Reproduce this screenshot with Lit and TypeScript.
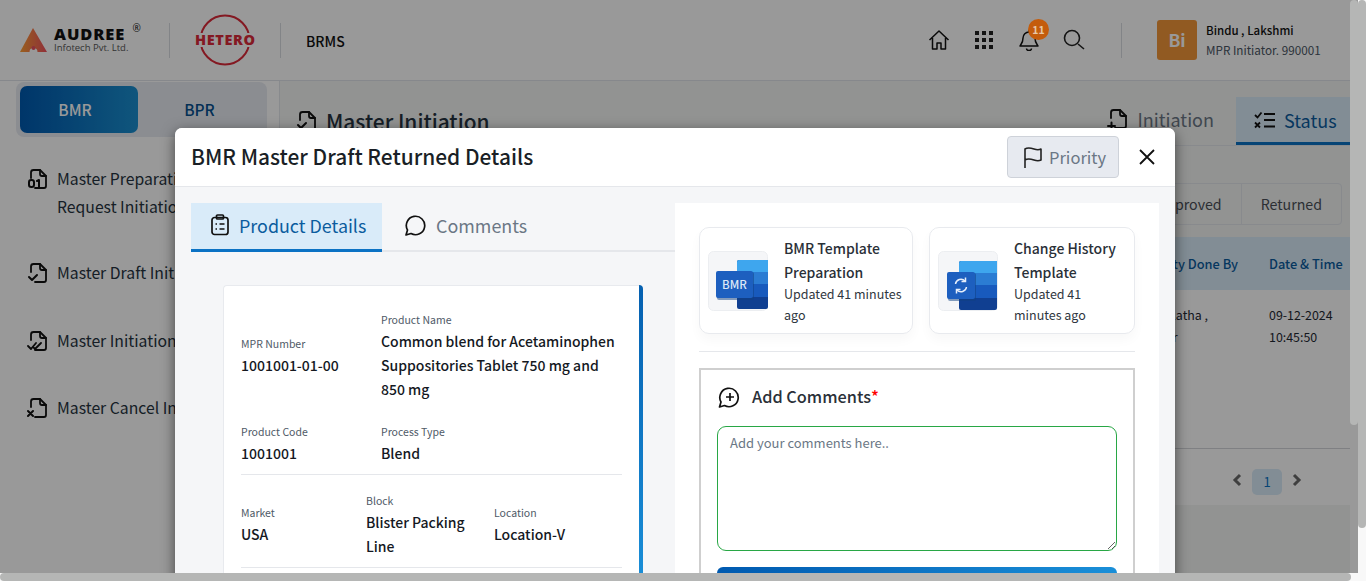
import { LitElement, html, css, svg } from "lit";
import { customElement } from "lit/decorators.js";

// document icon shared by the sidebar and the page tabs, only the mark at the corner changes
const docIcon = (mark: unknown, size = 22) => html`<svg width=${size} height=${size} viewBox="0 0 22 22" fill="none" stroke="#111" stroke-width="1.800" stroke-linejoin="round" stroke-linecap="round">
  <path d="M4 10V4.500A2.500 2.500 0 0 1 6.500 2H13l6 6v10a2 2 0 0 1-2 2H8" />
  <path d="M13 2v4a2 2 0 0 0 2 2h4" />
  ${mark}
</svg>`;

const sideItems = [
  { label: "Master Preparation", label2: "Request Initiation", mark: svg`<rect x="2" y="12" width="5" height="7" rx="2.200" stroke-width="2"/><path d="M10 13l2-1v7" stroke-width="2"/>` },
  { label: "Master Draft Initiation", mark: svg`<path d="M2 15l3 3 5-5" stroke-width="2"/>` },
  { label: "Master Initiation", mark: svg`<path d="M1 16l3 3 5-6M7 18l1 1 6-6" stroke-width="1.800"/>` },
  { label: "Master Cancel Initiation", mark: svg`<path d="M1 14l5 5M6 14l-5 5" stroke-width="2"/>` },
];

const fields1 = [
  { label: "MPR Number", value: "1001001-01-00" },
  { label: "Product Name", value: "Common blend for Acetaminophen Suppositories Tablet 750 mg and 850 mg" },
];
const fields2 = [
  { label: "Product Code", value: "1001001" },
  { label: "Process Type", value: "Blend" },
];
const fields3 = [
  { label: "Market", value: "USA" },
  { label: "Block", value: "Blister Packing Line" },
  { label: "Location", value: "Location-V" },
];

const tileStack = (x: number, y: number, w: number) => svg`
  <rect x=${x} y=${y} width=${w} height="49" rx="2" fill="#103f91"/>
  <path d="M${x} ${y + 2}a2 2 0 0 1 2-2h${w - 2}v12h-${w}z" fill="#3ea6ee"/>
  <rect x=${x} y=${y + 12} width=${w} height="12" fill="#2b7cd3"/>
  <rect x=${x} y=${y + 24} width=${w} height="13" fill="#185abd"/>
`;

@customElement("app-root")
export class AppRoot extends LitElement {
  static styles = css`
    :host {
      display: block;
      position: relative;
      width: 1366px;
      height: 581px;
      overflow: hidden;
      background: #fff;
      font-family: "Noto Sans CJK SC", "Noto Sans", sans-serif;
      color: #1f2933;
    }
    .page {
      display: flex;
      flex-direction: column;
      width: 1350px;
      height: 581px;
    }
    .topbar {
      display: flex;
      align-items: center;
      height: 80px;
      flex: none;
      background: #fff;
      border-bottom: 1px solid #dfe3ea;
    }
    .logo-a {
      display: flex;
      align-items: center;
      gap: 7px;
      margin-left: 20px;
      width: 149px;
    }
    .logo-a b {
      display: block;
      font-family: "Open Sans", sans-serif;
      font-size: 16.500px;
      line-height: 16px;
      font-weight: 800;
      color: #111;
      letter-spacing: 0.9px;
    }
    .logo-a .reg {
      font-family: "Open Sans", sans-serif;
      font-size: 10px;
      line-height: 10px;
      align-self: flex-start;
      margin: -3px 0 0 -3px;
      color: #111;
    }
    .logo-a small {
      display: block;
      font-family: "Open Sans", sans-serif;
      font-size: 9.500px;
      line-height: 12px;
      color: #555;
    }
    .vr {
      width: 1px;
      height: 35px;
      background: #d9dce2;
      flex: none;
    }
    .logo-h {
      width: 110px;
      display: flex;
      justify-content: center;
      flex: none;
    }
    .brms {
      margin-left: 25px;
      padding-top: 1px;
      font-size: 14px;
      font-weight: 500;
      color: #111;
    }
    .tools {
      display: flex;
      align-items: center;
      margin-left: auto;
    }
    .tool {
      position: relative;
      width: 45px;
      height: 24px;
      display: flex;
      justify-content: center;
      align-items: center;
    }
    .tools .vr {
      margin: 0 35px 0 25px;
    }
    .badge {
      position: absolute;
      z-index: 20;
      left: 22px;
      top: -9px;
      width: 21px;
      height: 21px;
      border-radius: 50%;
      background: #c45c0c;
      color: #e8c7a6;
      font-size: 10.500px;
      font-weight: 700;
      line-height: 21px;
      text-align: center;
    }
    .user {
      display: flex;
      align-items: center;
      gap: 9px;
      width: 193px;
    }
    .avatar {
      width: 40px;
      height: 40px;
      border-radius: 3px;
      background: #f2963a;
      color: #fff;
      font-size: 17.500px;
      font-weight: 700;
      text-align: center;
      line-height: 40px;
    }
    .user b {
      display: block;
      font-size: 11.500px;
      font-weight: 500;
      line-height: 20px;
      color: #111;
    }
    .user span {
      display: block;
      font-size: 11.700px;
      line-height: 20px;
      color: #4a5563;
    }
    .content {
      display: flex;
      flex: 1;
      min-height: 0;
    }
    .side {
      width: 280px;
      flex: none;
      box-sizing: border-box;
      border-right: 1px solid #e3e6ec;
      padding: 1px 12px 0 16px;
    }
    .switch {
      display: flex;
      height: 55px;
      box-sizing: border-box;
      padding: 4px;
      border-radius: 8px;
      background: #e8ebf2;
    }
    .switch div {
      flex: 1;
      text-align: center;
      font-size: 15.500px;
      line-height: 47px;
      font-weight: 500;
      color: #06508f;
      border-radius: 7px;
      padding-right: 2px;
    }
    .switch .on {
      flex: none;
      width: 110px;
      padding-right: 8px;
      color: #fff;
      background: linear-gradient(90deg, #005ab0, #1a8fd0);
    }
    .side ul {
      list-style: none;
      margin: 28px 0 0;
      padding: 0 0 0 11px;
    }
    .side li {
      display: flex;
      gap: 8px;
      font-size: 15.750px;
      line-height: 28px;
      color: #263340;
      margin-bottom: 39px;
    }
    .side li:first-child {
      margin-bottom: 38px;
    }
    .side li:nth-child(2) {
      margin-bottom: 40px;
    }
    .side svg {
      flex: none;
      margin-top: 3px;
    }
    .main {
      flex: 1;
      min-width: 0;
      display: flex;
      flex-direction: column;
      background: #f3f5f4;
    }
    .main-head {
      display: flex;
      justify-content: space-between;
      align-items: flex-end;
      height: 64px;
      flex: none;
      padding-left: 16px;
      border-bottom: 1px solid #e3e6ec;
    }
    .main-title {
      display: flex;
      align-items: center;
      gap: 8px;
      font-size: 20.900px;
      font-weight: 500;
      height: 48px;
      color: #263340;
    }
    .page-tabs {
      display: flex;
    }
    .page-tab {
      display: flex;
      align-items: center;
      gap: 9px;
      height: 48px;
      box-sizing: border-box;
      padding: 0 22px 5px 10px;
      font-size: 18px;
      color: #6b7785;
    }
    .page-tab.on {
      width: 114px;
      padding: 0 0 0 18px;
      color: #0b5c9e;
      background: #d9ebf9;
      border-bottom: 3px solid #0b72c4;
    }
    .sub {
      display: flex;
      justify-content: flex-end;
      margin: 37px 8px 12px 0;
    }
    .seg {
      display: flex;
      height: 40px;
      border: 1px solid #e3e6ec;
      border-radius: 4px;
      font-size: 14.200px;
      line-height: 40px;
      color: #4a4f57;
    }
    .seg span {
      padding: 0 19px;
    }
    .seg span + span {
      border-left: 1px solid #e3e6ec;
    }
    .panel {
      background: #fff;
      height: 268px;
    }
    .thead,
    .trow {
      display: grid;
      grid-template-columns: 1fr 130px 81px;
      font-size: 12.400px;
    }
    .thead {
      height: 53px;
      line-height: 53px;
      font-size: 12.800px;
      font-weight: 500;
      color: #0b5c9e;
      background: #d9ebf9;
    }
    .trow {
      height: 159px;
      padding-top: 14px;
      box-sizing: border-box;
      line-height: 22px;
      border-bottom: 1px solid #d4d6da;
    }
    .pager {
      display: flex;
      justify-content: flex-end;
      align-items: center;
      gap: 10px;
      height: 56px;
      box-sizing: border-box;
      padding: 10px 48px 0 0;
    }
    .pager svg {
      margin-bottom: 4px;
    }
    .pager .num {
      width: 30px;
      height: 26px;
      border-radius: 5px;
      background: #d9ebf9;
      color: #0b72c4;
      font-size: 13px;
      line-height: 26px;
      text-align: center;
    }
    .backdrop {
      position: absolute;
      inset: 0;
      z-index: 10;
      background: rgba(0, 0, 0, 0.4);
    }
    .track {
      position: absolute;
      z-index: 25;
      background: #f8f8f8;
    }
    .track.v {
      left: 1358px;
      top: 0;
      width: 8px;
      height: 581px;
    }
    .track.h {
      left: 0;
      top: 573px;
      width: 1366px;
      height: 8px;
    }
    .bar {
      position: absolute;
      z-index: 30;
      background: #b5b6b5;
      border-radius: 4px;
    }
    .bar.v1 {
      left: 1350px;
      top: 0;
      width: 8px;
      height: 425px;
    }
    .bar.v2 {
      left: 1358px;
      top: 0;
      width: 8px;
      height: 528px;
    }
    .bar.h {
      left: 0;
      top: 573px;
      width: 1351px;
      height: 8px;
    }
    .modal {
      position: absolute;
      z-index: 20;
      left: 175px;
      top: 128px;
      width: 1000px;
      height: 500px;
      background: #f5f6f8;
      border-radius: 7px 7px 0 0;
      box-shadow: 0 4px 14px rgba(0, 0, 0, 0.55);
      overflow: hidden;
    }
    .modal-head {
      display: flex;
      align-items: center;
      height: 58px;
      padding: 0 16px;
      background: #fff;
      border-bottom: 1px solid #e5e7eb;
    }
    .modal-head h2 {
      margin: 0 0 2px;
      font-size: 20.900px;
      font-weight: 500;
      color: #1a1f26;
      flex: 1;
    }
    .priority {
      display: flex;
      align-items: center;
      gap: 5px;
      width: 112px;
      height: 42px;
      box-sizing: border-box;
      padding: 0 0 1px 14px;
      border: 1px solid #ced2d9;
      border-radius: 4px;
      background: #e7eaf0;
      color: #6b7785;
      font-size: 16.500px;
    }
    .close {
      display: flex;
      margin: 0 4px 0 20px;
    }
    .modal-body {
      display: flex;
      padding: 16px 16px 0;
    }
    .left {
      width: 484px;
      flex: none;
    }
    .tabs {
      display: flex;
      height: 49px;
      border-bottom: 2px solid #e5e7eb;
      box-sizing: border-box;
    }
    .tab {
      display: flex;
      align-items: center;
      gap: 10px;
      height: 49px;
      flex: none;
      box-sizing: border-box;
      padding: 0 15px 5px 22px;
      font-size: 17.900px;
      white-space: nowrap;
      color: #6b7785;
    }
    .tab.on {
      width: 191px;
      padding: 0 0 2px 19px;
      gap: 9px;
      color: #0b5c9e;
      background: #d9ebf9;
      border-bottom: 3px solid #0b72c4;
    }
    .card {
      width: 420px;
      margin: 33px 0 0 32px;
      box-sizing: border-box;
      padding-right: 4px;
      border-radius: 0 4px 0 0;
      background: linear-gradient(180deg, #0560b0, #1a8fd8) no-repeat right / 4px 100%;
    }
    .card-in {
      box-sizing: border-box;
      min-height: 300px;
      padding: 25px 17px 0;
      background: #fff;
      border: 1px solid #e8eaee;
      border-right: 0;
      border-radius: 4px 0 0 0;
    }
    .row {
      display: grid;
      align-items: center;
    }
    .row.two {
      grid-template-columns: 140px 1fr;
    }
    .row.three {
      grid-template-columns: 125px 128px 1fr;
      padding: 17px 0 9px;
      border-bottom: 1px solid #e5e7eb;
    }
    .row.first {
      padding-bottom: 22px;
    }
    .row.second {
      padding-bottom: 9px;
      border-bottom: 1px solid #e5e7eb;
    }
    .field label {
      display: block;
      font-size: 10.500px;
      line-height: 18px;
      color: #4f5a67;
    }
    .field div {
      font-size: 14px;
      line-height: 24px;
      font-weight: 500;
      color: #15191f;
    }
    .right {
      width: 484px;
      flex: none;
      box-sizing: border-box;
      padding: 24px 24px 0;
      background: #fff;
      height: 500px;
    }
    .templates {
      display: grid;
      grid-template-columns: 214px 206px;
      gap: 16px;
      padding-bottom: 17px;
      border-bottom: 1px solid #e5e7eb;
    }
    .tpl {
      display: flex;
      gap: 16px;
      height: 107px;
      box-sizing: border-box;
      padding: 0 8px;
      align-items: center;
      border: 1px solid #e8eaee;
      border-radius: 10px;
      box-shadow: 0 6px 12px rgba(0, 0, 0, 0.03);
    }
    .tpl svg {
      flex: none;
    }
    .tpl b {
      display: block;
      font-size: 14px;
      font-weight: 500;
      line-height: 24px;
      color: #2a3038;
    }
    .tpl span {
      display: block;
      margin-top: -1px;
      font-size: 12.500px;
      line-height: 21px;
      color: #2f3640;
    }
    .comments {
      margin-top: 16px;
      box-sizing: border-box;
      height: 300px;
      padding: 14px 16px 0;
      border: 2px solid #cfcfcf;
    }
    .comments h3 {
      display: flex;
      align-items: center;
      gap: 12px;
      margin: 0 0 17px;
      font-size: 16.300px;
      line-height: 25px;
      font-weight: 500;
      color: #2a3038;
    }
    .comments h3 svg {
      margin-left: 1px;
    }
    .comments h3 i {
      color: #f00;
      font-style: normal;
      margin-left: -12px;
    }
    textarea {
      display: block;
      width: 400px;
      height: 125px;
      box-sizing: border-box;
      padding: 5px 12px;
      border: 1px solid #28a745;
      border-radius: 9px;
      font: inherit;
      font-size: 13px;
      line-height: 21px;
      outline: none;
    }
    textarea::placeholder {
      color: #6b7785;
    }
    .submit {
      margin-top: 16px;
      height: 42px;
      border-radius: 6px;
      background: linear-gradient(90deg, #005ab0, #1a8fd8);
    }
  `;

  render() {
    return html`
      <div class="page">
        <header class="topbar">
          <div class="logo-a">
            <svg width="27" height="24" viewBox="0 0 27 24">
              <defs>
                <linearGradient id="lg" x1="0" x2="1" y1="0" y2="0">
                  <stop offset="0" stop-color="#ffa033" />
                  <stop offset="1" stop-color="#f0505f" />
                </linearGradient>
              </defs>
              <path d="M13 0L27 24H17.500a4 4 0 0 0-8 0H0z" fill="url(#lg)" />
              <circle cx="13.500" cy="20" r="2" fill="#e8505f" />
            </svg>
            <div>
              <b>AUDREE</b>
              <small>Infotech Pvt. Ltd.</small>
            </div>
            <span class="reg">®</span>
          </div>
          <div class="vr"></div>
          <div class="logo-h">
            <svg width="64" height="52" viewBox="0 0 64 52">
              <circle cx="32" cy="26" r="24.500" fill="none" stroke="#dc2a3a" stroke-width="2" />
              <rect x="0" y="19" width="64" height="14" fill="#fff" />
              <text x="2" y="31" font-family="Open Sans" font-size="14.500" font-weight="800" fill="#dc2a3a" textLength="60">HETERO</text>
            </svg>
          </div>
          <div class="vr"></div>
          <div class="brms">BRMS</div>
          <div class="tools">
            <div class="tool">
              <svg width="22" height="22" viewBox="0 0 22 22" fill="none" stroke="#111" stroke-width="1.500" stroke-linejoin="round">
                <path d="M1.500 11L11 2l9.500 9M4.500 9v11h4.500v-6h4v6h4.500V9" />
              </svg>
            </div>
            <div class="tool">
              <svg width="18" height="18" viewBox="0 0 18 18" fill="#222">
                ${[0, 7, 14].map((y) => [0, 7, 14].map((x) => svg`<rect x=${x} y=${y} width="4" height="4" />`))}
              </svg>
            </div>
            <div class="tool">
              <svg width="20" height="22" viewBox="0 0 20 22" fill="none" stroke="#111" stroke-width="1.500" stroke-linejoin="round">
                <path d="M10 3a6 6 0 0 0-6 6c0 5-2 6-3 8h18c-1-2-3-3-3-8a6 6 0 0 0-6-6zM10 1v2M7.500 19.500a2.500 2 0 0 0 5 0" />
              </svg>
              <span class="badge">11</span>
            </div>
            <div class="tool">
              <svg width="22" height="22" viewBox="0 0 22 22" fill="none" stroke="#222" stroke-width="1.600">
                <circle cx="9" cy="9" r="7.500" />
                <path d="M15 15l6 5" />
              </svg>
            </div>
            <div class="vr"></div>
            <div class="user">
              <div class="avatar">Bi</div>
              <div>
                <b>Bindu , Lakshmi</b>
                <span>MPR Initiator. 990001</span>
              </div>
            </div>
          </div>
        </header>
        <div class="content">
          <aside class="side">
            <div class="switch">
              <div class="on">BMR</div>
              <div>BPR</div>
            </div>
            <ul>
              ${sideItems.map(
                (it) => html`<li>
                  ${docIcon(it.mark)}
                  <div>${it.label}${it.label2 ? html`<br />${it.label2}` : ""}</div>
                </li>`
              )}
            </ul>
          </aside>
          <section class="main">
            <div class="main-head">
              <div class="main-title">
                ${docIcon(svg`<path d="M2 15l3 3 5-5" stroke-width="2"/>`)}
                Master Initiation
              </div>
              <div class="page-tabs">
                <div class="page-tab">
                  ${docIcon(svg`<path d="M1 18h7M4.500 14.500v7" stroke-width="2"/>`)}
                  Initiation
                </div>
                <div class="page-tab on">
                  <svg width="21" height="18" viewBox="0 0 21 18" fill="none" stroke="#111" stroke-width="1.800">
                    <path d="M1 4l2.500 2.500L7.500 1.500M1 11.500l5 5M6 11.500l-5 5M10 3h11M10 9h11M10 15.500h11" />
                  </svg>
                  Status
                </div>
              </div>
            </div>
            <div class="sub">
              <div class="seg"><span>Approved</span><span>Returned</span></div>
            </div>
            <div class="panel">
              <div class="thead"><span></span><span>Activity Done By</span><span>Date &amp; Time</span></div>
              <div class="trow">
                <span></span>
                <span>Sumalatha ,<br />Kumar</span>
                <span>09-12-2024<br />10:45:50</span>
              </div>
              <div class="pager">
                <svg width="10" height="14" viewBox="0 0 10 14" fill="none" stroke="#6a6a6a" stroke-width="3"><path d="M8 2L3 7l5 5" /></svg>
                <div class="num">1</div>
                <svg width="10" height="14" viewBox="0 0 10 14" fill="none" stroke="#6a6a6a" stroke-width="3"><path d="M2 2l5 5-5 5" /></svg>
              </div>
            </div>
          </section>
        </div>
      </div>

      <div class="backdrop"></div>
      <div class="track v"></div>
      <div class="track h"></div>
      <div class="bar v1"></div>
      <div class="bar v2"></div>
      <div class="bar h"></div>

      <div class="modal">
        <div class="modal-head">
          <h2>BMR Master Draft Returned Details</h2>
          <div class="priority">
            <svg width="22" height="24" viewBox="0 0 22 24" fill="none" stroke="#222" stroke-width="1.600" stroke-linejoin="round">
              <path d="M3 23V4c3-2 6-1 9 0s5 1 7 0v11c-2 1-4 1-7 0s-6-2-9 0" />
            </svg>
            Priority
          </div>
          <div class="close">
            <svg width="16" height="16" viewBox="0 0 16 16" stroke="#111" stroke-width="1.800"><path d="M1 1l14 14M15 1L1 15" /></svg>
          </div>
        </div>
        <div class="modal-body">
          <div class="left">
            <div class="tabs">
              <div class="tab on">
                <svg width="20" height="22" viewBox="0 0 20 22" fill="none" stroke="#111" stroke-width="1.700" stroke-linejoin="round">
                  <rect x="2" y="3.500" width="16" height="17" rx="2.500" />
                  <rect x="6.500" y="1" width="7" height="4" rx="1" />
                  <path d="M5.500 10h1.500M5.500 15h1.500M9.500 10h5M9.500 15h5" />
                </svg>
                Product Details
              </div>
              <div class="tab">
                <svg width="22" height="22" viewBox="0 0 22 22" fill="none" stroke="#111" stroke-width="1.700" stroke-linejoin="round">
                  <path d="M2 21l1.500-5A9.200 9.200 0 1 1 7 19.500z" />
                </svg>
                Comments
              </div>
            </div>
            <div class="card">
              <div class="card-in">
                <div class="row two first">
                  ${fields1.map((f) => html`<div class="field"><label>${f.label}</label><div>${f.value}</div></div>`)}
                </div>
                <div class="row two second">
                  ${fields2.map((f) => html`<div class="field"><label>${f.label}</label><div>${f.value}</div></div>`)}
                </div>
                <div class="row three">
                  ${fields3.map((f) => html`<div class="field"><label>${f.label}</label><div>${f.value}</div></div>`)}
                </div>
              </div>
            </div>
          </div>
          <div class="right">
            <div class="templates">
              <div class="tpl">
                <svg width="60" height="60" viewBox="0 0 60 60">
                  <rect x="0.500" y="0.500" width="59" height="59" rx="5" fill="#f5f6f8" stroke="#eceef1" />
                  ${tileStack(29, 9, 31)}
                  <rect x="8" y="20" width="37" height="28" rx="2" fill="#0f3f80" opacity="0.5" transform="translate(1 1)" />
                  <rect x="8" y="20" width="37" height="27" rx="2" fill="#1d5fbf" />
                  <text x="26.500" y="38" text-anchor="middle" font-family="Noto Sans CJK SC" font-size="11.500" font-weight="500" fill="#dbe8f7">BMR</text>
                </svg>
                <div>
                  <b>BMR Template Preparation</b>
                  <span>Updated 41 minutes ago</span>
                </div>
              </div>
              <div class="tpl">
                <svg width="60" height="60" viewBox="0 0 60 60">
                  <rect x="0.500" y="0.500" width="59" height="59" rx="5" fill="#f5f6f8" stroke="#eceef1" />
                  ${tileStack(21, 10, 38)}
                  <rect x="9" y="21" width="28" height="28" rx="2" fill="#0f3f80" opacity="0.5" transform="translate(1 1)" />
                  <rect x="9" y="21" width="28" height="27" rx="2" fill="#1d5fbf" />
                  <path d="M17.500 33a5.500 5.500 0 0 1 9.500-3M28.500 36a5.500 5.500 0 0 1-9.500 3" fill="none" stroke="#e6eefa" stroke-width="1.500" />
                  <path d="M27.500 26.500v4h-4M18.500 42.500v-4h4" fill="none" stroke="#e6eefa" stroke-width="1.500" />
                </svg>
                <div>
                  <b>Change History Template</b>
                  <span>Updated 41 minutes ago</span>
                </div>
              </div>
            </div>
            <div class="comments">
              <h3>
                <svg width="22" height="22" viewBox="0 0 22 22" fill="none" stroke="#111" stroke-width="1.700" stroke-linejoin="round">
                  <path d="M1.500 21l1.500-5A9.200 9.200 0 1 1 6.500 19.500zM12 7v8M8 11h8" />
                </svg>
                Add Comments<i>*</i>
              </h3>
              <textarea placeholder="Add your comments here.."></textarea>
              <div class="submit"></div>
            </div>
          </div>
        </div>
      </div>
    `;
  }
}
